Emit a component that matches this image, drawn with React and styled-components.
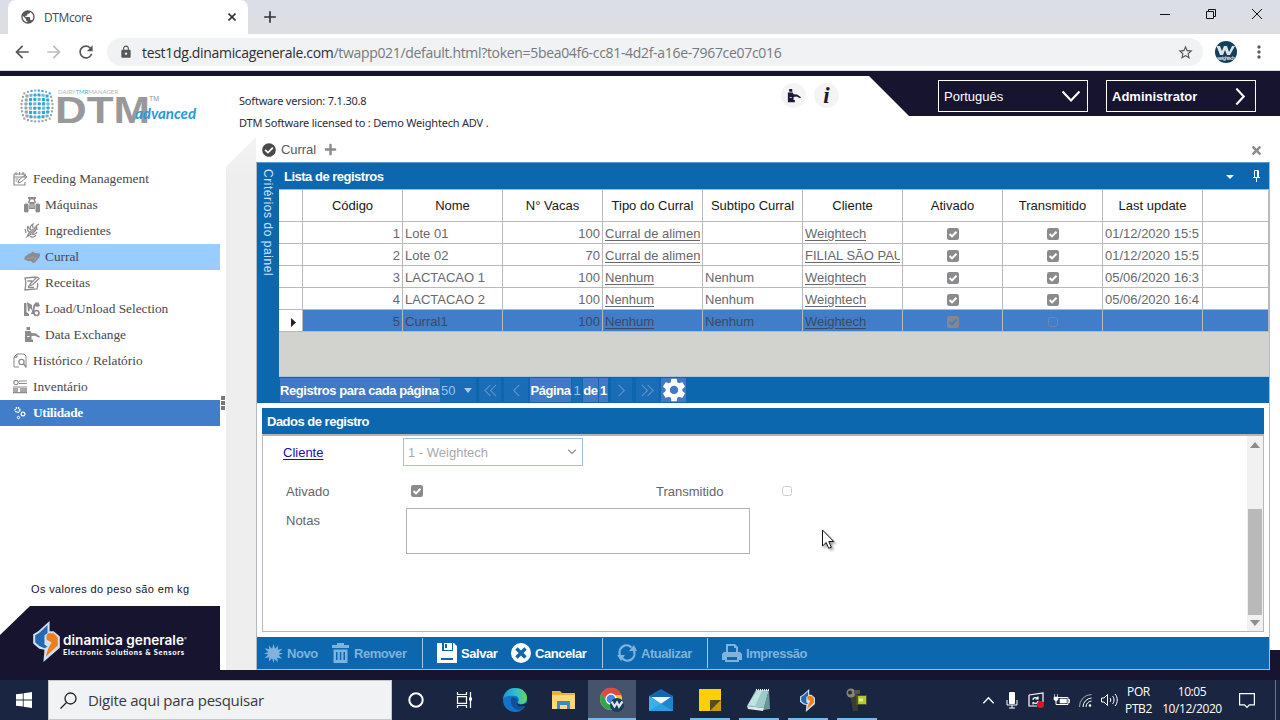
import React from 'react';

import styled, { createGlobalStyle, css } from 'styled-components';

import {
	MdArrowBack,
	MdArrowForward,
	MdRefresh,
	MdLock,
	MdStarBorder,
	MdMoreVert,
	MdPublic,
	MdAdd,
	MdSettings,
} from 'react-icons/md';
import { FaCheckCircle, FaPlus, FaTimes } from 'react-icons/fa';

const GlobalStyle = createGlobalStyle`
	* {
		box-sizing: border-box;
	}
	body {
		margin: 0;
		background: #fff;
		overflow: hidden;
		font-family: 'Liberation Sans', Arial, sans-serif;
		font-size: 13px;
	}
	svg {
		display: block;
		flex: none;
	}
`;

const navy = '#16142f';
const blue = '#0c67af';
const line = '#b9b9bb';

const Page = styled.div`
	width: 1280px;
	height: 720px;
	display: flex;
	flex-direction: column;
	position: relative;
	overflow: hidden;
`;

// browser
const TabStrip = styled.div`
	height: 34px;
	display: flex;
	padding-left: 8px;
	background: linear-gradient(#dbdde8, #dedfe2);
`;

const BrowserTab = styled.div`
	width: 240px;
	display: flex;
	align-items: center;
	padding: 0 12px 0 12px;
	background: #fff;
	border-radius: 8px 8px 0 0;
	font: 12px 'Open Sans', sans-serif;
	letter-spacing: -0.4px;
	color: #45484c;
	span {
		flex: 1;
		padding-left: 8px;
	}
`;

const NewTab = styled.div`
	display: flex;
	align-items: center;
	padding-left: 12px;
	color: #333;
	flex: 1;
`;

const WindowButtons = styled.div`
	display: flex;
	width: 138px;
	height: 28px;
	svg {
		width: 46px;
		height: 28px;
	}
`;

const AddressRow = styled.div`
	height: 37px;
	display: flex;
	align-items: center;
	background: #fff;
	border-bottom: 1px solid #d4dde2;
	color: #5a5d61;
`;

const NavButton = styled.div`
	width: 32px;
	display: flex;
	justify-content: center;
	color: ${({ off }) => (off ? '#bcbdbf' : '#54575b')};
	&:first-child {
		margin-left: 6px;
	}
`;

const Omnibox = styled.div`
	width: 1096px;
	height: 28px;
	margin: 0 11px 0 5px;
	padding: 0 9px 0 12px;
	display: flex;
	align-items: center;
	background: #f1f2f4;
	border-radius: 14px;
	font: 14px 'Open Sans', sans-serif;
	letter-spacing: -0.32px;
	color: #76797d;
	white-space: nowrap;
	p {
		margin: 0 0 0 9px;
		flex: 1;
	}
	b {
		font-weight: 400;
		color: #2c2e31;
	}
`;

const Avatar = styled.svg`
	margin-right: 11px;
`;

// app header
const NavyLine = styled.div`
	height: ${({ h }) => h}px;
	flex: none;
	background: ${navy};
`;

const Header = styled.header`
	height: 61px;
	display: flex;
	background: #fff;
`;

const LogoBox = styled.div`
	width: 239px;
`;

const Versions = styled.div`
	width: 542px;
	padding-top: 14px;
	font: 11px/22px 'Noto Sans', sans-serif;
	letter-spacing: -0.2px;
	color: #2b2b38;
`;

const RoundButton = styled.div`
	width: 25px;
	height: 25px;
	margin: 7px 8px 0 0;
	border-radius: 50%;
	background: #f4f4f5;
	display: flex;
	align-items: center;
	justify-content: center;
	font: italic bold 23px/25px 'Liberation Serif', serif;
	color: #1c1a3a;
`;

const HeaderBand = styled.div`
	flex: 1;
	height: 40px;
	margin-left: 22px;
	padding: 4px 24px 0 0;
	display: flex;
	justify-content: flex-end;
	gap: 18px;
	background: ${navy};
	clip-path: polygon(0 0, 100% 0, 100% 100%, 40px 100%);
`;

const HeaderSelect = styled.div`
	width: 150px;
	height: 32px;
	padding: 0 7px 0 5px;
	display: flex;
	align-items: center;
	justify-content: space-between;
	border: 1px solid #fff;
	color: #fff;
	font-weight: ${({ bold }) => (bold ? 700 : 400)};
`;

// body
const Body = styled.div`
	height: 533px;
	display: flex;
	background: #fff;
`;

const Sidebar = styled.aside`
	width: 220px;
	padding-top: 29px;
	display: flex;
	flex-direction: column;
`;

const MenuItem = styled.div`
	height: 26px;
	display: flex;
	align-items: center;
	padding-left: ${({ sub }) => (sub ? 24 : 12)}px;
	gap: 5px;
	font: 13.33px 'Liberation Serif', serif;
	color: #47474c;
	svg {
		color: #8c8c8f;
	}
	${({ current }) =>
		current &&
		css`
			background: #99ccff;
		`}
	${({ active }) =>
		active &&
		css`
			background: #417dc8;
			color: #fff;
			font-weight: 700;
			letter-spacing: -0.3px;
			svg {
				color: #fff;
			}
		`}
`;

const Unit = styled.div`
	margin-top: auto;
	padding: 0 0 8px 31px;
	font-size: 11px;
	line-height: 18px;
	letter-spacing: 0.35px;
	color: #14141f;
`;

const Brand = styled.div`
	height: 64px;
	background: ${navy};
	clip-path: polygon(30px 0, 100% 0, 100% 100%, 0 100%, 0 29px);
`;

const Splitter = styled.div`
	width: 6px;
	display: flex;
	flex-direction: column;
	gap: 1px;
	padding: 259px 0 0 1px;
	i {
		width: 4px;
		height: 4px;
		background: #77777c;
	}
`;

const Gutter = styled.div`
	width: 30px;
	background: linear-gradient(#f3f3f3, #eeeeee 40px);
	clip-path: polygon(30px 0, 100% 100%, 0 100%, 0 30px);
`;

const RightEdge = styled.div`
	width: 10px;
	border-bottom: 20px solid ${navy};
`;

const Main = styled.main`
	width: 1014px;
	display: flex;
	flex-direction: column;
`;

const Tabs = styled.div`
	height: 25px;
	display: flex;
	align-items: center;
	padding: 0 7px 0 6px;
	gap: 5px;
	color: #59595b;
	span {
		letter-spacing: -0.05px;
		padding-right: 3px;
	}
	svg:last-child {
		margin-left: auto;
		margin-top: 2px;
	}
`;

const Frame = styled.div`
	height: 508px;
	display: flex;
	flex-direction: column;
	border: 1px solid #b3bac4;
	border-top-color: #5b9bcf;
`;

const ListPanel = styled.section`
	height: 240px;
	display: flex;
	background: ${blue};
`;

const Criteria = styled.div`
	width: 22px;
	padding: 6px 4px 0 0;
	writing-mode: vertical-rl;
	font-size: 12px;
	line-height: 14px;
	letter-spacing: 0.55px;
	color: #cfe3f5;
`;

const ListBody = styled.div`
	width: 990px;
	display: flex;
	flex-direction: column;
`;

const PanelTitle = styled.div`
	height: 26px;
	flex: none;
	display: flex;
	align-items: center;
	padding: ${({ pad }) => pad || '0'};
	background: ${blue};
	color: #fff;
	font-weight: 700;
	letter-spacing: -0.5px;
	span {
		flex: 1;
	}
`;

const Grid = styled.div`
	height: 188px;
	background: #d2d2ce;
	border-top: 1px solid #8dbfe4;
	border-bottom: 1px solid #a9c7dc;
`;

const GridRow = styled.div`
	display: grid;
	grid-template-columns: 24px repeat(9, 100px) 1fr;
	height: ${({ head }) => (head ? 32 : 22)}px;
	background: ${({ selected }) => (selected ? '#417dc8' : '#fff')};
	color: ${({ head }) => (head ? '#17171a' : '#68686c')};
	${({ selected }) =>
		selected &&
		css`
			color: #3a4a66;
		`}
`;

const Cell = styled.div`
	display: flex;
	align-items: center;
	justify-content: ${({ align }) => align || 'flex-start'};
	padding: ${({ head }) => (head ? 0 : 2)}px 2px 0 2px;
	border-right: 1px solid ${line};
	border-bottom: 1px solid ${line};
	overflow: hidden;
	white-space: nowrap;
	background: ${({ marker }) => (marker ? '#fff' : 'transparent')};
	text-decoration: ${({ link }) => (link ? 'underline' : 'none')};
	text-underline-offset: 2px;
	span {
		min-width: 0;
		overflow: hidden;
	}
	svg {
		margin-top: 1px;
	}
`;

const RowMarker = styled.svg`
	margin-left: 5px;
`;

const Pager = styled.div`
	height: 26px;
	display: flex;
	align-items: center;
	padding-left: 1px;
	color: #fff;
	svg {
		color: #5b94cc;
	}
`;

const PagerCell = styled.div`
	width: ${({ w }) => w}px;
	height: 24px;
	margin-right: ${({ gap }) => gap || 0}px;
	display: flex;
	align-items: center;
	justify-content: ${({ start }) => (start ? 'flex-start' : 'center')};
	background: ${({ lit }) => (lit ? '#4079c5' : '#196cb5')};
	color: ${({ dim }) => (dim ? '#9ec3e8' : '#fff')};
	font-weight: ${({ dim }) => (dim ? 400 : 700)};
	letter-spacing: ${({ dim }) => (dim ? 0 : '-0.43px')};
	white-space: nowrap;
`;

const PageSizeArrow = styled.svg`
	margin-left: 8px;
`;

const PagerGear = styled(MdSettings)`
	&& {
		color: #fff;
	}
`;

const RecordPanel = styled.section`
	height: 224px;
	margin: 5px;
	display: flex;
	flex-direction: column;
`;

const RecordBox = styled.div`
	flex: 1;
	display: flex;
	border: 1px solid ${line};
	border-top: 2px solid #b5b5b7;
	background: #fff;
	color: #646468;
`;

const Form = styled.div`
	flex: 1;
	padding-left: 20px;
`;

const FormRow = styled.div`
	display: flex;
	height: ${({ h }) => h}px;
	align-items: ${({ top }) => (top ? 'flex-start' : 'center')};
	padding-left: ${({ inset }) => inset || 0}px;
	padding-top: ${({ drop }) => drop || 0}px;
`;

const Label = styled.div`
	width: ${({ w }) => w}px;
	padding-top: ${({ drop }) => drop || 0}px;
	color: ${({ link }) => (link ? '#1a0dbb' : 'inherit')};
	text-decoration: ${({ link }) => (link ? 'underline' : 'none')};
	text-underline-offset: 2px;
`;

const ClientSelect = styled.div`
	width: 180px;
	height: 28px;
	padding: 0 4px;
	display: flex;
	align-items: center;
	justify-content: space-between;
	border: 1px solid #a3c0e2;
	color: #a9a9ab;
`;

const Notes = styled.div`
	width: 344px;
	height: 46px;
	border: 1px solid #b3b3b5;
`;

const ScrollBar = styled.div`
	width: 16px;
	display: flex;
	flex-direction: column;
	align-items: center;
	background: #f1f1f1;
	padding: 6px 0 4px;
	div {
		width: 14px;
		height: 106px;
		margin: 61px 0 5px;
		background: #b9b9b9;
	}
`;

const ActionBar = styled.div`
	height: 32px;
	display: flex;
	background: ${blue};
`;

const ActionGroup = styled.div`
	width: ${({ w }) => w}px;
	margin: 1px 0;
	display: flex;
	align-items: center;
	padding-left: ${({ pad }) => pad}px;
	border-right: ${({ last }) => (last ? 'none' : '1px solid #a7c8e4')};
`;

const Action = styled.div`
	width: ${({ w }) => w}px;
	display: flex;
	align-items: center;
	gap: ${({ gap }) => gap || 4}px;
	font-weight: 700;
	letter-spacing: -0.45px;
	color: ${({ off }) => (off ? '#7fb2dc' : '#fff')};
`;

// windows taskbar
const Taskbar = styled.div`
	height: 40px;
	display: flex;
	background: #1a2641;
	color: #fff;
`;

const Slot = styled.div`
	width: ${({ w }) => w || 49}px;
	height: 40px;
	display: flex;
	align-items: center;
	justify-content: center;
	background: ${({ active }) => (active ? '#46536c' : 'transparent')};
	box-shadow: ${({ active }) => (active ? 'inset 0 -2px #76b9ed' : 'none')};
	${({ open }) =>
		open &&
		css`
			background: linear-gradient(#76b9ed, #76b9ed) center bottom / 40px 2px
				no-repeat;
		`}
`;

const Search = styled.div`
	width: 344px;
	height: 40px;
	padding-left: 11px;
	display: flex;
	align-items: center;
	gap: 11px;
	background: #f1f2f3;
	border: 1px solid #c4c6c9;
	font: 15px 'Open Sans', sans-serif;
	letter-spacing: -0.28px;
	color: #38393c;
`;

const Tray = styled.div`
	margin-left: auto;
	display: flex;
	border-right: 1px solid #69728a;
	margin-right: 4px;
`;

const TrayText = styled.div`
	width: ${({ w }) => w}px;
	padding-top: 3px;
	text-align: center;
	font: 12px/17px 'Open Sans', sans-serif;
	letter-spacing: -0.4px;
	white-space: nowrap;
`;

const Pointer = styled.svg`
	position: absolute;
	left: 821px;
	top: 529px;
	filter: drop-shadow(2px 2px 1px rgba(0, 0, 0, 0.35));
`;

const Chevron = ({ d, size = 16, w = 1.5, color = 'currentColor' }) => (
	<svg width={size} height={size} viewBox="0 0 16 16" fill="none" stroke={color} strokeWidth={w}>
		<path d={d} />
	</svg>
);

const Check = ({ on, dim }) => (
	<svg width="12" height="12" viewBox="0 0 12 12">
		{on ? (
			<>
				<rect width="12" height="12" rx="2.2" fill={dim ? '#83888f' : '#8b8b8e'} />
				<path d="M2.6 6 5 8.4 9.5 3.7" fill="none" stroke={dim ? '#477dc0' : '#fff'} strokeWidth="2" />
			</>
		) : (
			<rect x="1.5" y="1.5" width="9" height="9" rx="2" fill="none" stroke={dim ? '#7088a8' : '#cdcdcf'} />
		)}
	</svg>
);

// sidebar drawings, 16px box
const icons = {
	feeding: (
		<>
			<path d="M2 3h11v4M2 3v11h11v-3M2 6h11M4 1v3M7.500 1v3M11 1v3" fill="none" stroke="currentColor" strokeWidth="1.2" />
			<path d="m6 12 1-3 6-5 2 2-6 5zM3.500 8h3M3.500 10h2" fill="none" stroke="currentColor" />
		</>
	),
	tractor: (
		<>
			<path d="M4 0h8v2h-1l1 4h-1.500L9.500 2.500h-3L5.500 6H4l1-4H4z" fill="currentColor" />
			<path d="M5.500 5h5l.5 7H5z" fill="currentColor" />
			<rect y="6.500" width="4.500" height="9" rx="1.500" fill="currentColor" />
			<rect x="11.500" y="6.500" width="4.500" height="9" rx="1.500" fill="currentColor" />
			<path d="M6 8h4M6 10h4" stroke="#fff" strokeWidth=".6" />
		</>
	),
	corn: (
		<>
			<path d="M1 15c2-1 2-4 5-7s5-4 7-6c0 3 1 4-2 7s-5 3-7 5z" fill="currentColor" />
			<path d="M5 9C3 7 3 5 4 3c0 3 2 3 3 4M6 6c0-2 1-4 3-5-1 2 0 3 0 4M8 11c2 1 4 0 5-2M6 13c2 2 5 1 6-1M12 3l3-2M2 10 1 6M10 7l4-1" fill="none" stroke="currentColor" strokeWidth="1.200" />
			<path d="m5 12 5-7M7 11l5-6" stroke="#fff" strokeWidth=".4" />
		</>
	),
	pen: (
		<>
			<path d="M0 10c1-3 4-5 7-6l2-1.500 2 1.500 5 .5c.5 2-.5 4-2 5.500l-3 3.500c-2 1-3 0-4-1.500-2.500.5-5-.5-7-2z" fill="currentColor" />
			<path d="M3 9c3 1 5-1 7-1M10 12l2-4" stroke="#a9a9a9" fill="none" strokeWidth=".8" />
		</>
	),
	recipe: (
		<>
			<path d="M12 2 1 3c1 3 1 7 0 12l12-1c1-2 1-4 .5-6" fill="none" stroke="currentColor" strokeWidth="1.300" />
			<path d="m5 11 2-3 6-6 2 1.500-6 6zM3.500 6H8M4 12.500h6" fill="none" stroke="currentColor" strokeWidth="1.300" />
		</>
	),
	load: (
		<>
			<path d="M0 2h2.500v9L5 13v2H0zM3 1l5 3v5l-2-2-1 4-1-1z" fill="currentColor" />
			<path d="m8.500 8 1-4 2-2.500h3L16 5l-3 1-1.500-1-1 3v5H7l1-3z" fill="currentColor" />
			<circle cx="12.500" cy="12" r="2.500" fill="none" stroke="currentColor" strokeWidth="1.700" />
		</>
	),
	exchange: (
		<path d="M2.500 0h3.500v3H2.500zM1 4h5.500l1 2 4 .3 4.500 3.200-1 1.200L11 8.700 7.500 9v3.500H9V15H1zM3 9h2.500v1H3z" fillRule="evenodd" fill="currentColor" />
	),
	history: (
		<>
			<path d="M5 1h7l2 2v10M5 1v3H2v10h5M5 4H2l3-3" fill="none" stroke="currentColor" />
			<circle cx="9.500" cy="9" r="2.600" fill="none" stroke="currentColor" strokeWidth="1.200" />
			<path d="m11.500 11 3 3.500" stroke="currentColor" strokeWidth="1.500" />
		</>
	),
	inventory: (
		<>
			<circle cx="4" cy="3.500" r="2.200" fill="none" stroke="currentColor" strokeWidth="1.200" />
			<path d="M7 2h8M7 4.500h8M1 8h14M1 13.700h14" stroke="currentColor" strokeWidth="1.200" />
			<path d="M1 10h5M8 10h7M1 12h5M8 12h7" stroke="currentColor" strokeWidth="1.300" />
		</>
	),
	gears: (
		<>
			<circle cx="5.500" cy="5" r="2.300" fill="none" stroke="currentColor" strokeWidth="1.500" strokeDasharray="1.400 .6" />
			<circle cx="11" cy="9" r="1.900" fill="none" stroke="currentColor" strokeWidth="1.200" />
			<circle cx="6.500" cy="12.500" r="1.200" fill="none" stroke="currentColor" />
		</>
	),
};

const menu = [
	{ text: 'Feeding Management', icon: 'feeding' },
	{ text: 'Máquinas', icon: 'tractor', sub: true },
	{ text: 'Ingredientes', icon: 'corn', sub: true },
	{ text: 'Curral', icon: 'pen', sub: true, current: true },
	{ text: 'Receitas', icon: 'recipe', sub: true },
	{ text: 'Load/Unload Selection', icon: 'load', sub: true },
	{ text: 'Data Exchange', icon: 'exchange', sub: true },
	{ text: 'Histórico / Relatório', icon: 'history' },
	{ text: 'Inventário', icon: 'inventory' },
	{ text: 'Utilidade', icon: 'gears', active: true },
];

const columns = ['Código', 'Nome', 'N° Vacas', 'Tipo do Curral', 'Subtipo Curral', 'Cliente', 'Ativado', 'Transmitido', 'Last update'];

const records = [
	{ id: 1, nome: 'Lote 01', vacas: 100, tipo: 'Curral de alimen', subtipo: '', cliente: 'Weightech', sent: true, date: '01/12/2020 15:5' },
	{ id: 2, nome: 'Lote 02', vacas: 70, tipo: 'Curral de alimen', subtipo: '', cliente: 'FILIAL SÃO PAU', sent: true, date: '01/12/2020 15:5' },
	{ id: 3, nome: 'LACTACAO 1', vacas: 100, tipo: 'Nenhum', subtipo: 'Nenhum', cliente: 'Weightech', sent: true, date: '05/06/2020 16:3' },
	{ id: 4, nome: 'LACTACAO 2', vacas: 100, tipo: 'Nenhum', subtipo: 'Nenhum', cliente: 'Weightech', sent: true, date: '05/06/2020 16:4' },
	{ id: 5, nome: 'Curral1', vacas: 100, tipo: 'Nenhum', subtipo: 'Nenhum', cliente: 'Weightech', sent: false, date: '', selected: true },
];

const globeRows = [0, 1, 2, 3, 4, 5, 6, 7];

const DtmLogo = () => (
	<svg width="210" height="61" viewBox="0 0 210 61">
		{globeRows.map((r) =>
			globeRows.map((c) => {
				const u = (c - 3.5) / 3.5;
				const v = (r - 3.5) / 3.5;
				const x = 37 + 15.5 * u * (1 - 0.18 * v * v);
				const y = 30 + 15.5 * v * (1 - 0.18 * u * u);
				const edge = Math.max(Math.abs(u), Math.abs(v));
				const s = edge > 0.9 ? 2.2 : 3.1;
				return (
					<rect
						key={`${r}-${c}`}
						x={x - s / 2}
						y={y - s / 2}
						width={s}
						height={s}
						rx=".7"
						fill={(edge > 0.9 && r > 0) || c < 2 ? '#9aa5a9' : (r + c) % 3 === 0 ? '#7fb3bb' : '#2fa5dc'}
					/>
				);
			})
		)}
		<text x="58" y="18" fontFamily="Lato" fontSize="6.500" fill="#b5b5b7" textLength="60" lengthAdjust="spacingAndGlyphs">
			DAIRY<tspan fill="#53b4e0">TMR</tspan>MANAGER
		</text>
		<text x="55" y="47" fontFamily="Liberation Sans" fontWeight="700" fontSize="37" fill="#98999b" textLength="95" lengthAdjust="spacingAndGlyphs">
			DTM
		</text>
		<text x="149" y="25" fontFamily="Liberation Sans" fontSize="7" fill="#98999b">
			TM
		</text>
		<text x="135" y="43" fontFamily="Lato" fontStyle="italic" fontWeight="700" fontSize="14.500" fill="#1e9cd8" textLength="61" lengthAdjust="spacingAndGlyphs">
			advanced
		</text>
	</svg>
);

const Bolt = ({ w, h }) => (
	<svg width={w} height={h} viewBox="0 0 28 40">
		<path d="M17 0v10h4l6 5v11L11 40l1-12-5-1-6-5V13l5-3z" fill="#cfe0f2" />
		<path d="M15 4v8l-3 2v9l3 2-3 1.500-5-2L3 21v-7l4-2.500z" fill="#2468b4" />
		<path d="M16 12h5l4 4v8L13 35l3-9 3-5-5-3v-4z" fill="#ee7f1a" />
	</svg>
);

const BrandLogo = () => (
	<svg width="220" height="64" viewBox="0 0 220 64">
		<g transform="translate(32 15)">
			<Bolt w={29} h={41} />
		</g>
		<text x="63" y="39" fontFamily="Inter" fontWeight="600" fontSize="13" fill="#fff" textLength="121" lengthAdjust="spacingAndGlyphs">
			dinamica generale
		</text>
		<text x="184" y="34" fontFamily="Inter" fontSize="4" fill="#fff">
			®
		</text>
		<text x="63" y="49" fontFamily="Lato" fontWeight="900" fontSize="7.500" fill="#fff" textLength="121">
			Electronic Solutions &amp; Sensors
		</text>
	</svg>
);

const Browser = () => (
	<>
		<TabStrip>
			<BrowserTab>
				<MdPublic size={16} color="#54575b" />
				<span>DTMcore</span>
				<svg width="8" height="8" viewBox="0 0 8 8" stroke="#333" strokeWidth="1.600">
					<path d="m.5 .5 7 7M7.500 .5l-7 7" />
				</svg>
			</BrowserTab>
			<NewTab>
				<MdAdd size={20} />
			</NewTab>
			<WindowButtons>
				<svg viewBox="0 0 46 28" stroke="#111" fill="none">
					<path d="M18 14.500h10" />
				</svg>
				<svg viewBox="0 0 46 28" stroke="#111" fill="none">
					<path d="M18.500 11.500h7v7h-7zM20.500 11.500v-2h7v7h-2" />
				</svg>
				<svg viewBox="0 0 46 28" stroke="#111" fill="none">
					<path d="m18 9 10 10M28 9 18 19" />
				</svg>
			</WindowButtons>
		</TabStrip>
		<AddressRow>
			<NavButton>
				<MdArrowBack size={20} />
			</NavButton>
			<NavButton off>
				<MdArrowForward size={20} />
			</NavButton>
			<NavButton>
				<MdRefresh size={20} />
			</NavButton>
			<Omnibox>
				<MdLock size={14} color="#54575b" />
				<p>
					<b>test1dg.dinamicagenerale.com</b>/twapp021/default.html?token=5bea04f6-cc81-4d2f-a16e-7967ce07c016
				</p>
				<MdStarBorder size={17} color="#54575b" />
			</Omnibox>
			<Avatar width="24" height="24" viewBox="0 0 24 24">
				<circle cx="12" cy="12" r="11" fill="#143f5c" />
				<path d="m2.500 6 3.500 9h3l2-5 2 5h3l5-9h-3l-3 6-2-6h-3l-2 5-2-5z" fill="#dfe3e6" />
				<text x="3" y="19.500" fontFamily="Liberation Sans" fontWeight="700" fontSize="5" fill="#cfd8de" textLength="18">
					weightech
				</text>
			</Avatar>
			<MdMoreVert size={20} />
		</AddressRow>
	</>
);

const RecordRow = ({ row }) => (
	<GridRow selected={row.selected}>
		<Cell marker align="center">
			{row.selected && (
				<RowMarker width="5" height="9" viewBox="0 0 5 9">
					<path d="M0 0 5 4.500 0 9z" fill="#222" />
				</RowMarker>
			)}
		</Cell>
		<Cell align="flex-end">{row.id}</Cell>
		<Cell>{row.nome}</Cell>
		<Cell align="flex-end">{row.vacas}</Cell>
		<Cell link>
			<span>{row.tipo}</span>
		</Cell>
		<Cell>{row.subtipo}</Cell>
		<Cell link>
			<span>{row.cliente}</span>
		</Cell>
		<Cell align="center">
			<Check on dim={row.selected} />
		</Cell>
		<Cell align="center">
			<Check on={row.sent} dim={row.selected} />
		</Cell>
		<Cell>{row.date}</Cell>
		<Cell />
	</GridRow>
);

const RecordList = () => (
	<ListPanel>
		<Criteria>Critérios do painel</Criteria>
		<ListBody>
			<PanelTitle pad="0 8px 0 5px">
				<span>Lista de registros</span>
				<svg width="35" height="14" viewBox="0 0 35 14">
					<path d="M0 6h8l-4 4z" fill="#fff" />
					<path d="M28.500 8.500v-7h4v7M27 8.500h7M30.500 9v4" fill="none" stroke="#fff" />
					<path d="M31.500 1.500v7" stroke="#fff" />
				</svg>
			</PanelTitle>
			<Grid>
				<GridRow head>
					<Cell head />
					{columns.map((name) => (
						<Cell key={name} head align="center">
							{name}
						</Cell>
					))}
					<Cell head />
				</GridRow>
				{records.map((row) => (
					<RecordRow key={row.id} row={row} />
				))}
			</Grid>
			<Pager>
				<PagerCell lit start w={160}>
					Registros para cada página
				</PagerCell>
				<PagerCell dim start w={36} gap={3}>
					&#8202;50
					<PageSizeArrow width="8" height="5" viewBox="0 0 8 5">
						<path d="M0 0h8L4 5z" fill="#a9cbee" />
					</PageSizeArrow>
				</PagerCell>
				<PagerCell w={22} gap={3}>
					<Chevron d="M8 2 2 8l6 6M14 2 8 8l6 6" size={15} w={1.2} />
				</PagerCell>
				<PagerCell w={24} gap={2}>
					<Chevron d="M11 2 5 8l6 6" size={15} w={1.2} />
				</PagerCell>
				<PagerCell lit w={41} gap={1}>
					Página
				</PagerCell>
				<PagerCell dim w={10} gap={1}>
					1
				</PagerCell>
				<PagerCell lit w={15} gap={1}>
					de
				</PagerCell>
				<PagerCell lit w={9} gap={3}>
					1
				</PagerCell>
				<PagerCell w={21} gap={4}>
					<Chevron d="m5 2 6 6-6 6" size={15} w={1.2} />
				</PagerCell>
				<PagerCell w={23} gap={2}>
					<Chevron d="m2 2 6 6-6 6M8 2l6 6-6 6" size={15} w={1.2} />
				</PagerCell>
				<PagerCell lit w={25}>
					<PagerGear size={28} />
				</PagerCell>
			</Pager>
		</ListBody>
	</ListPanel>
);

const RecordForm = () => (
	<RecordPanel>
		<PanelTitle pad="0 5px">
			<span>Dados de registro</span>
		</PanelTitle>
		<RecordBox>
			<Form>
				<FormRow h={32}>
					<Label link w={120}>
						Cliente
					</Label>
					<ClientSelect>
						1 - Weightech
						<Chevron d="m3 5 5 5 5-5" size={12} color="#8b8b8d" />
					</ClientSelect>
				</FormRow>
				<FormRow h={40} inset={3} drop={6}>
					<Label w={125}>Ativado</Label>
					<Check on />
					<Label w={233} />
					<Label w={125}>Transmitido</Label>
					<Check />
				</FormRow>
				<FormRow h={50} inset={3} top>
					<Label w={120} drop={5}>
						Notas
					</Label>
					<Notes />
				</FormRow>
			</Form>
			<ScrollBar>
				<svg width="10" height="6" viewBox="0 0 10 6">
					<path d="M0 6h10L5 0z" fill="#8d8d8f" />
				</svg>
				<div />
				<svg width="10" height="6" viewBox="0 0 10 6">
					<path d="M0 0h10L5 6z" fill="#8d8d8f" />
				</svg>
			</ScrollBar>
		</RecordBox>
	</RecordPanel>
);

const Actions = () => (
	<ActionBar>
		<ActionGroup w={166} pad={7}>
			<Action off w={68} gap={4}>
				<svg width="19" height="19" viewBox="0 0 20 20">
					<path
						d="m10 0 1.500 5L15 1.500 14.500 6l5-1-4 4 4.500 1-4.500 1.500 3.500 4-5-1 .5 5-3.500-4L10 20l-1.500-5L5 18.500 5.500 14l-5 1 4-4L0 10l4.500-1.500-4-4 5 1L5 1.500 8.500 5z"
						fill="currentColor"
					/>
				</svg>
				Novo
			</Action>
			<Action off w={80} gap={5}>
				<svg width="17" height="20" viewBox="0 0 17 20">
					<path d="M0 2h5V0h7v2h5v3H0zM1.500 6.500h14V20h-14zM4 9v8h1.500V9zm3.800 0v8h1.500V9zm3.700 0v8H13V9z" fillRule="evenodd" fill="currentColor" />
				</svg>
				Remover
			</Action>
		</ActionGroup>
		<ActionGroup w={180} pad={14}>
			<Action w={74}>
				<svg width="20" height="20" viewBox="0 0 20 20">
					<path d="M0 0h5v8h11V0h1l3 3v17H0zM7 0h8v7H7zm1 1v4h2V1zM4 15v2h12v-2z" fillRule="evenodd" fill="#fff" />
				</svg>
				Salvar
			</Action>
			<Action w={80}>
				<svg width="20" height="20" viewBox="0 0 20 20">
					<circle cx="10" cy="10" r="10" fill="#fff" />
					<path d="m5.500 5.500 9 9M14.500 5.500l-9 9" stroke={blue} strokeWidth="3.500" />
				</svg>
				Cancelar
			</Action>
		</ActionGroup>
		<ActionGroup w={105} pad={14}>
			<Action off w={80}>
				<svg width="20" height="20" viewBox="0 0 20 20">
					<path d="M3 12A7 7 0 0 1 14.500 4.500M17 8A7 7 0 0 1 5.500 15.500" fill="none" stroke="currentColor" strokeWidth="2.300" />
					<path d="M12 8h8l-3-6zM0 12h8l-4 6z" fill="currentColor" />
				</svg>
				Atualizar
			</Action>
		</ActionGroup>
		<ActionGroup w={200} pad={14} last>
			<Action off w={100}>
				<svg width="20" height="20" viewBox="0 0 20 20">
					<path d="M4 1h9l3 3v5h2l2 2v6h-3v2H3v-2H0v-6l2-2h2zm2 2v6h8V5h-2V3zM5 14v3h10v-3z" fillRule="evenodd" fill="currentColor" />
				</svg>
				Impressão
			</Action>
		</ActionGroup>
	</ActionBar>
);

const WindowsBar = () => (
	<Taskbar>
		<Slot w={48}>
			<svg width="16" height="16" viewBox="0 0 16 16">
				<path d="M0 2.300 6.800 1.400v6.200H0zM7.600 1.200 16 0v7.600H7.600zM0 8.400h6.800v6.200L0 13.700zM7.600 8.400H16V16l-8.400-1.200z" fill="#fff" />
			</svg>
		</Slot>
		<Search>
			<svg width="17" height="17" viewBox="0 0 17 17" fill="none" stroke="#222" strokeWidth="1.300">
				<circle cx="10.500" cy="6.500" r="5.500" />
				<path d="m6.500 10.500-6 6" />
			</svg>
			Digite aqui para pesquisar
		</Search>
		<Slot w={48}>
			<svg width="18" height="18" viewBox="0 0 18 18">
				<circle cx="9" cy="9" r="6.700" fill="none" stroke="#fff" strokeWidth="2" />
			</svg>
		</Slot>
		<Slot w={50}>
			<svg width="18" height="16" viewBox="0 0 18 16" fill="none" stroke="#fff" strokeWidth="1.200">
				<path d="M1.500 0v2.500h9V0M1.500 4.600h9v6.800h-9zM1.500 16v-2.500h9V16M14.500 0v16" />
				<path d="M13 5.500h3v3h-3z" fill="#fff" stroke="none" />
			</svg>
		</Slot>
		<Slot>
			<svg width="24" height="24" viewBox="0 0 24 24">
				<defs>
					<linearGradient id="edgeTop" x1="0" x2="1">
						<stop offset="0" stopColor="#1d9ad8" />
						<stop offset=".6" stopColor="#35c1c4" />
						<stop offset="1" stopColor="#63d94f" />
					</linearGradient>
				</defs>
				<circle cx="12" cy="12" r="12" fill="#1273c8" />
				<path d="M0 11C1 4 6 0 12 0c8 0 12 5 12 10 0 4-3 6-6 6-2 0-4-1-3-2 2-3 0-6-3-6-5-1-10 0-12 3z" fill="url(#edgeTop)" />
				<path d="M9 9c-3 5 0 12 6 13 3 0 6-2 7-4-3 1-8 1-8-3 0-1 1-2 0-4-1-1-3-2-5-2z" fill="#124f96" />
				<path d="M15 14c-1 2 2 3 4 2.500L24 15l-1 4-2-1-3 .5c-3 0-5-2-3-4.500z" fill="#1a2641" />
			</svg>
		</Slot>
		<Slot>
			<svg width="23" height="20" viewBox="0 0 23 20">
				<path d="M0 1h8l2 2h13v16H0z" fill="#e9b03a" />
				<path d="M0 5h23v14H0z" fill="#fcd978" />
				<path d="M5 19v-8h13v8h-3v-4H8v4z" fill="#3d88cf" />
			</svg>
		</Slot>
		<Slot active w={48}>
			<svg width="26" height="26" viewBox="0 0 26 26">
				<circle cx="12" cy="12" r="11" fill="#f7c934" />
				<path d="M2.500 6.500A11 11 0 0 1 22.500 8H12L8 14z" fill="#dd4b3e" />
				<path d="M2.500 6.500A11 11 0 0 0 12 23l4-8-8-1z" fill="#33a352" />
				<circle cx="12" cy="12" r="5" fill="#4486f0" stroke="#fff" strokeWidth="1.300" />
				<circle cx="18" cy="18" r="7" fill="#173f59" />
				<path d="m12.500 14.500 3 5 2.500-4 2 4 3.500-5" fill="none" stroke="#dfe5e8" strokeWidth="2.200" />
			</svg>
		</Slot>
		<Slot w={50}>
			<svg width="24" height="22" viewBox="0 0 24 22">
				<path d="M0 7 12 0l12 7v15H0z" fill="#1267b4" />
				<path d="M2 8h20L12 15z" fill="#f2f6fa" />
				<path d="M0 7v15h24z" fill="#3ab0ee" />
				<path d="M24 7v15H0z" fill="#2496dc" opacity=".65" />
			</svg>
		</Slot>
		<Slot open w={48}>
			<svg width="22" height="22" viewBox="0 0 22 22">
				<path d="M0 0h22v11L11 22H0z" fill="#fdd004" />
				<path d="M11 11h11L11 22z" fill="#584b1d" />
				<path d="M22 11v11H11z" fill="#c99d0a" />
			</svg>
		</Slot>
		<Slot open>
			<svg width="24" height="22" viewBox="0 0 24 22">
				<path d="M9 1h13l-5 18L0 17z" fill="#9ccacb" />
				<path d="M10 2h5L8 17l-7-1z" fill="#c3e2e2" />
				<path d="m22 1 1 19-7 1z" fill="#6c9497" />
				<path d="m0 17 17 2-1 3L1 20z" fill="#dfe9ea" />
				<path d="M9 1h13" stroke="#eee" strokeDasharray="1 1" strokeWidth="2" />
			</svg>
		</Slot>
		<Slot open>
			<Bolt w={17} h={23} />
		</Slot>
		<Slot open>
			<svg width="23" height="24" viewBox="0 0 23 24">
				<path d="M5 4h7l1 19H8L6 12z" fill="#3b3c35" />
				<circle cx="6" cy="5" r="4.500" fill="#83857b" />
				<circle cx="5" cy="4.500" r="2" fill="#2b2c27" />
				<path d="M9 2h6v4h-6z" fill="#55574e" />
				<path d="M11 7h11v10H11z" fill="#4c5230" />
				<path d="M13 8h8v8h-8z" fill="#b2c832" />
				<path d="M14 10.500h4v3h-4z" fill="#e4ee7e" />
			</svg>
		</Slot>
		<Tray>
			<Slot w={23}>
				<Chevron d="m2.500 11 5.500-6 5.500 6" size={15} w={1.4} />
			</Slot>
			<Slot w={24}>
				<svg width="12" height="17" viewBox="0 0 12 17">
					<rect x="3" width="6" height="12" rx="1" fill="#fff" />
					<path d="M1 8v5h10V8M6 13v3M3 16h6" fill="none" stroke="#fff" />
				</svg>
			</Slot>
			<Slot w={25}>
				<svg width="17" height="17" viewBox="0 0 17 17" fill="none" stroke="#fff" strokeWidth="1.200">
					<path d="m1 3 14-2v9M1 3v11h8" />
					<path d="M5 8c0-3 4-3 5-1M10 4.500V7H7.500M10 9c0 3-4 3-5 1M5 12.500V10" />
					<circle cx="12.500" cy="12.500" r="3.500" fill="#e81123" stroke="none" />
				</svg>
			</Slot>
			<Slot w={24}>
				<svg width="17" height="12" viewBox="0 0 17 12">
					<path d="M5 3.500h10v7H5M15 5.500h1.500v3H15" fill="none" stroke="#fff" />
					<path d="M7 5h6.500v4H7zM1 3h4v2.500L3.500 7h-1L1 5.500zM1.500 0v3M4.500 0v3" fill="#fff" stroke="#fff" strokeWidth=".6" />
					<path d="M3 7v3.500h3" fill="none" stroke="#fff" />
				</svg>
			</Slot>
			<Slot w={25}>
				<svg width="13" height="13" viewBox="0 0 13 13" fill="none" stroke="#fff">
					<path d="M.5 13A12 12 0 0 1 12.500.5" opacity=".6" />
					<path d="M4 13a9 9 0 0 1 8.500-9M7 13a6 6 0 0 1 5.500-6" />
					<circle cx="11" cy="11.500" r="1.300" fill="#fff" stroke="none" />
				</svg>
			</Slot>
			<Slot w={22}>
				<svg width="17" height="14" viewBox="0 0 17 14" fill="none" stroke="#fff">
					<path d="M.5 5H3l3.500-3.500v11L3 9H.5zM9 5c1 1 1 3 0 4M11.500 3c2 2 2 6 0 8M14 1c3 3 3 9 0 12" />
				</svg>
			</Slot>
			<TrayText w={37}>
				POR
				<br />
				PTB2
			</TrayText>
			<TrayText w={70}>
				10:05
				<br />
				10/12/2020
			</TrayText>
			<Slot w={40}>
				<svg width="16" height="17" viewBox="0 0 16 17" fill="none" stroke="#fff" strokeWidth="1.200">
					<path d="M.6 1.600h14.800v11.300h-5L8 15.500l-2.500-2.600H.6z" />
				</svg>
			</Slot>
			<Slot w={8} />
		</Tray>
	</Taskbar>
);

const App = () => {
	return (
		<>
			<GlobalStyle />
			<Page>
				<Browser />
				<NavyLine h={5} />
				<Header>
					<LogoBox>
						<DtmLogo />
					</LogoBox>
					<Versions>
						Software version: 7.1.30.8
						<br />
						DTM Software licensed to : Demo Weightech ADV .
					</Versions>
					<RoundButton>
						<svg width="14" height="14" viewBox="0 0 16 16">
							{icons.exchange}
						</svg>
					</RoundButton>
					<RoundButton>i</RoundButton>
					<HeaderBand>
						<HeaderSelect>
							Português
							<Chevron d="m.5 4 7.500 8 7.500-8" size={18} w={1.8} />
						</HeaderSelect>
						<HeaderSelect bold>
							Administrator
							<Chevron d="m5 .5 7 7.500-7 7.500" size={17} w={2} />
						</HeaderSelect>
					</HeaderBand>
				</Header>
				<Body>
					<Sidebar>
						{menu.map((item) => (
							<MenuItem key={item.text} sub={item.sub} current={item.current} active={item.active}>
								<svg width="16" height="16" viewBox="0 0 16 16">
									{icons[item.icon]}
								</svg>
								{item.text}
							</MenuItem>
						))}
						<Unit>Os valores do peso são em kg</Unit>
						<Brand>
							<BrandLogo />
						</Brand>
					</Sidebar>
					<Splitter>
						<i />
						<i />
						<i />
					</Splitter>
					<Gutter />
					<Main>
						<Tabs>
							<FaCheckCircle size={14} color="#4a4a4c" />
							<span>Curral</span>
							<FaPlus size={13} color="#8b8b8d" />
							<FaTimes size={13} color="#8b8b8d" />
						</Tabs>
						<Frame>
							<RecordList />
							<RecordForm />
							<Actions />
						</Frame>
					</Main>
					<RightEdge />
				</Body>
				<NavyLine h={10} />
				<WindowsBar />
				<Pointer width="14" height="21" viewBox="0 0 14 21">
					<path d="M1.500 1v16l3.700-3.500 2.500 5.800 2.600-1.100-2.500-5.700h4.900z" fill="#fff" stroke="#111" />
				</Pointer>
			</Page>
		</>
	);
};

export default App;
